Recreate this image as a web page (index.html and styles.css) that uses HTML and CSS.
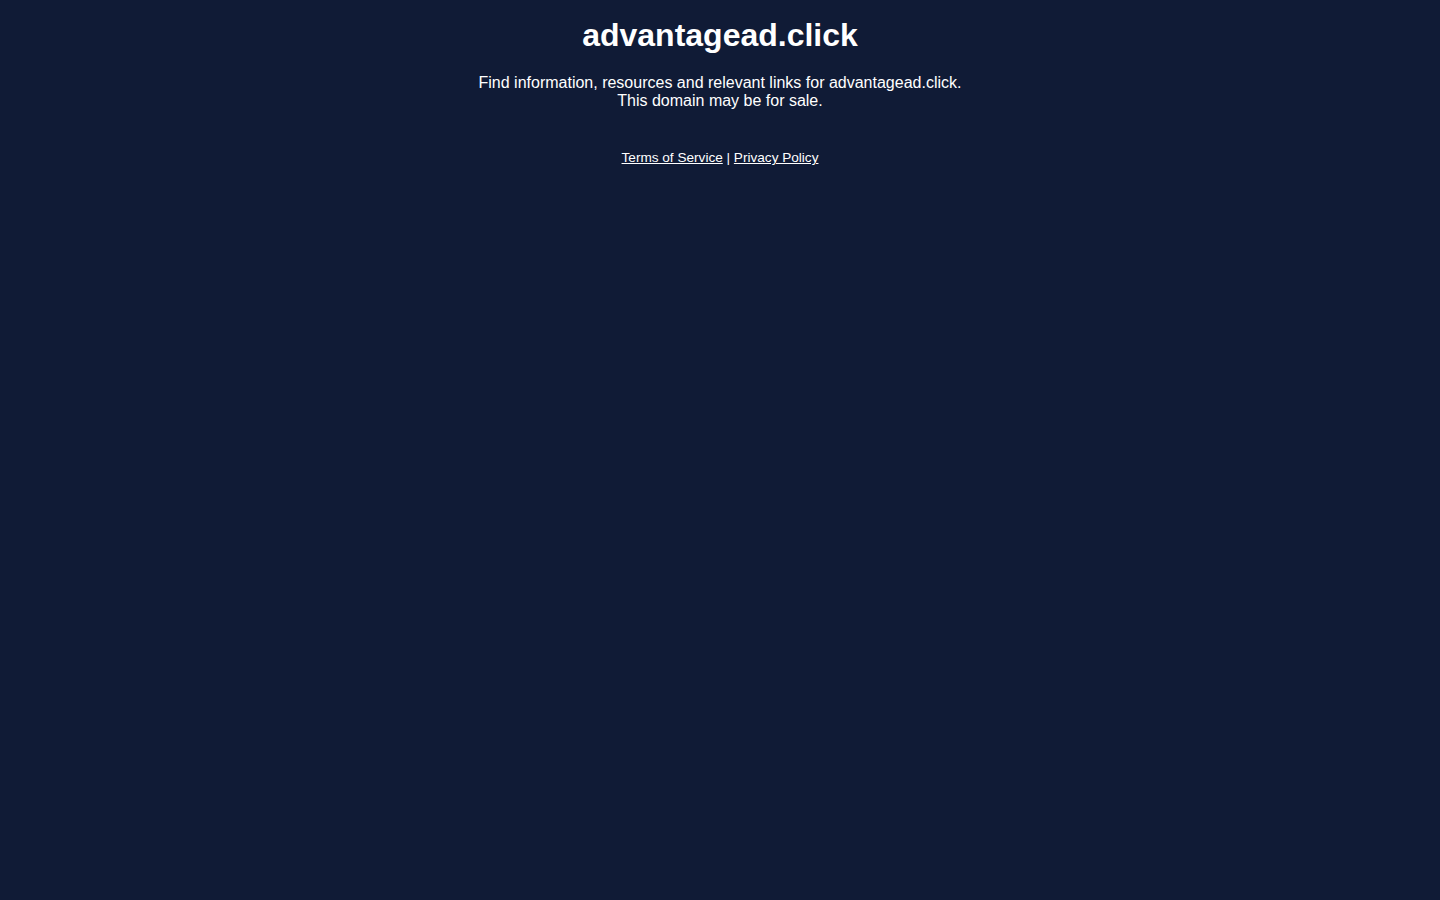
FILE: index.html
```html
<!DOCTYPE html>
<html>
<head>
<meta charset="utf-8">
<link rel="stylesheet" href="styles.css">
</head>
<body>
<div class="page">
  <h1 class="title">advantagead.click</h1>
  <p class="lead">Find information, resources and relevant links for advantagead.click.<br>This domain may be for sale.</p>
  <p class="links"><a href="#">Terms of Service</a> | <a href="#">Privacy Policy</a></p>
</div>
</body>
</html>
```
FILE: styles.css
```css
html, body {
  margin: 0;
  padding: 0;
  background: #101b36;
  height: 100%;
}
body {
  font-family: "Liberation Sans", Arial, sans-serif;
  color: #ffffff;
}
.page {
  text-align: center;
  padding-top: 15px;
}
.title {
  font-size: 32px;
  font-weight: bold;
  line-height: 40px;
  margin: 0;
}
.lead {
  font-size: 16px;
  line-height: 18px;
  margin: 19px 0 0;
}
.links {
  font-size: 13.6px;
  line-height: 16px;
  margin: 40px 0 0;
}
.links a {
  color: #ffffff;
  text-decoration: underline;
}
```
